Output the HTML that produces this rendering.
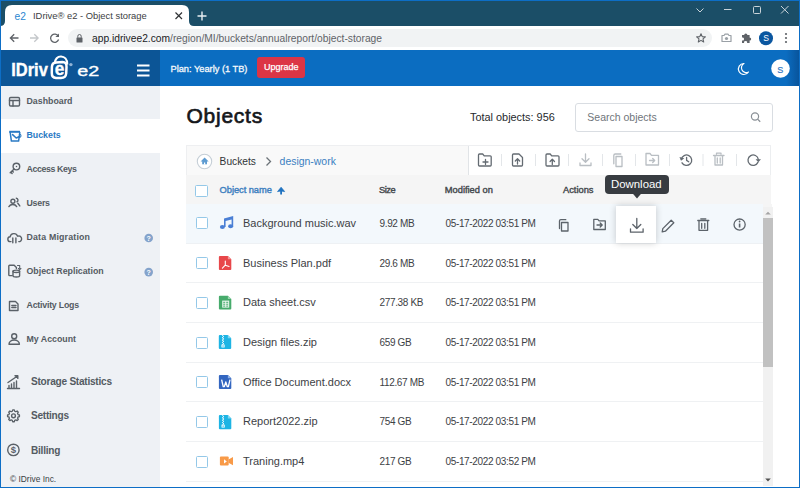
<!DOCTYPE html>
<html><head><meta charset="utf-8">
<style>
*{margin:0;padding:0;box-sizing:border-box}
html,body{width:800px;height:488px;overflow:hidden;background:#fff;font-family:"Liberation Sans",sans-serif;position:relative}
.a{position:absolute}
.t{position:absolute;white-space:nowrap;line-height:1}
svg{position:absolute;overflow:visible}
#tabstrip{left:0;top:0;width:800px;height:26px;background:#1b4e67}
#toolbar{left:0;top:26px;width:800px;height:24px;background:#fff}
#omni{left:68px;top:29px;width:644px;height:17.5px;background:#f1f3f4;border-radius:9px}
#hdrL{left:0;top:50px;width:160px;height:36px;background:#0c5596}
#hdrR{left:160px;top:50px;width:640px;height:36px;background:#0b6dc1}
#side{left:0;top:86px;width:160px;height:402px;background:#eef1f5}
.nav{position:absolute;left:0;width:160px;height:34px;font-size:8.8px;font-weight:bold;color:#545b62}
.nav span{position:absolute;left:26.5px;top:12px;line-height:1}
.t2 span{left:31px;font-size:10.1px;top:10.5px;letter-spacing:-0.25px}
#border{left:0;top:0;width:800px;height:488px;border:1px solid #0d6ec6;pointer-events:none}
.row{position:absolute;left:186px;width:577px;height:40px;border-bottom:1px solid #eff1f3}
.cb{position:absolute;left:9.5px;top:13.5px;width:12px;height:12px;border:1px solid #94c8e8;border-radius:1.5px;background:#fff}
.fn{position:absolute;left:57px;top:14px;font-size:11px;color:#3d4145;line-height:1}
.sz{position:absolute;left:193.5px;top:15px;font-size:10px;letter-spacing:-0.35px;color:#3d4145;line-height:1}
.md{position:absolute;left:259.5px;top:15px;font-size:10px;letter-spacing:-0.35px;color:#3d4145;line-height:1}
.ic{position:absolute;left:33px;top:12px}
.th{position:absolute;top:186.3px;font-size:9.3px;-webkit-text-stroke:0.4px currentColor;color:#45494d;line-height:1}
</style></head><body>
<!-- browser chrome -->
<div id="tabstrip" class="a"></div>
<svg style="left:0;top:0" width="800" height="50">
  <path d="M0 26 Q5 26 5 21 L5 12 Q5 5 12 5 L182 5 Q189 5 189 12 L189 21 Q189 26 194 26 Z" fill="#fff"/>
  <!-- favicon e2 -->
  <text x="14.6" y="19.6" font-family="Liberation Sans" font-size="11" fill="#2a86d0" textLength="11.4" lengthAdjust="spacingAndGlyphs">e2</text>
  <!-- close x -->
  <path d="M175.5 12.5l6.5 6.5M182 12.5l-6.5 6.5" stroke="#303336" stroke-width="1.2"/>
  <!-- plus -->
  <path d="M202 11.5v9M197.5 16h9" stroke="#e8eef2" stroke-width="1.4"/>
  <!-- window controls -->
  <path d="M696.5 8.5l3.5 3.5 3.5-3.5" stroke="#c9d3d9" stroke-width="1" fill="none"/>
  <path d="M724 9.5h7.5" stroke="#c9d3d9" stroke-width="1"/>
  <rect x="753.5" y="6.5" width="7" height="7" rx="1" stroke="#c9d3d9" stroke-width="1" fill="none"/>
  <path d="M781 6l7.5 7.5M788.5 6l-7.5 7.5" stroke="#c9d3d9" stroke-width="1"/>
</svg>
<div class="t" style="left:33px;top:11px;font-size:9.4px;color:#3c4043">IDrive® e2 - Object storage</div>
<div id="toolbar" class="a"></div>
<div id="omni" class="a"></div>
<svg style="left:0;top:0" width="800" height="50">
  <!-- back -->
  <path d="M18.5 38H10.5M14.2 34.2L10.4 38l3.8 3.8" stroke="#5f6368" stroke-width="1.3" fill="none"/>
  <path d="M30 38h8M34.3 34.2l3.8 3.8-3.8 3.8" stroke="#c4c7ca" stroke-width="1.3" fill="none"/>
  <!-- reload -->
  <path d="M58.3 36.2A4.1 4.1 0 1 0 58.6 39.5" stroke="#5f6368" stroke-width="1.3" fill="none"/>
  <path d="M59 33.5v3.6h-3.6z" fill="#5f6368"/>
  <!-- lock -->
  <rect x="76.5" y="37.5" width="6" height="5" rx="0.6" fill="#5f6368"/>
  <path d="M77.8 37.8v-1.6a1.7 1.7 0 0 1 3.4 0v1.6" stroke="#5f6368" stroke-width="1" fill="none"/>
  <!-- star -->
  <path d="M701.00 33.70 L702.23 36.60 L705.37 36.88 L703.00 38.95 L703.70 42.02 L701.00 40.40 L698.30 42.02 L699.00 38.95 L696.63 36.88 L699.77 36.60Z" stroke="#5f6368" stroke-width="1.1" fill="none" stroke-linejoin="round"/>
  <!-- camera -->
  <path d="M722 35.5h2l1-1.3h3l1 1.3h2v6h-9z" stroke="#9aa0a6" stroke-width="1.2" fill="none" stroke-linejoin="round"/>
  <circle cx="726.5" cy="38.5" r="1.6" fill="#9aa0a6"/>
  <!-- puzzle -->
  <path d="M742 35h2.2a1.6 1.6 0 1 1 3.2 0h2.2v2.4a1.6 1.6 0 1 1 0 3.2v2.4h-2.6a1.5 1.5 0 1 0-2.8 0h-2.2v-2.6a1.5 1.5 0 1 0 0-2.8z" fill="#5f6368"/>
  <!-- avatar -->
  <circle cx="766" cy="38.2" r="7" fill="#0b57a0"/>
  <text x="766" y="41.2" font-family="Liberation Sans" font-size="8.6" fill="#fff" text-anchor="middle">S</text>
  <!-- menu -->
  <circle cx="786" cy="34" r="1.1" fill="#5f6368"/><circle cx="786" cy="38" r="1.1" fill="#5f6368"/><circle cx="786" cy="42" r="1.1" fill="#5f6368"/>
</svg>
<div class="t" style="left:92px;top:34px;font-size:10.25px;color:#202124">app.idrivee2.com<span style="color:#5f6368">/region/MI/buckets/annualreport/object-storage</span></div>

<!-- app header -->
<div id="hdrL" class="a"></div>
<div id="hdrR" class="a"></div>
<div class="a" style="left:786px;top:50px;width:13px;height:36px;background:linear-gradient(to right,rgba(0,20,60,0),rgba(0,20,60,0.28))"></div>
<svg style="left:0;top:50px" width="160" height="36">
  <text x="11.2" y="25.5" font-family="Liberation Sans" font-weight="bold" font-size="18.8" fill="#fff" stroke="#fff" stroke-width="0.4" textLength="36.6" lengthAdjust="spacingAndGlyphs">IDriv</text>
  <!-- lock e -->
  <path d="M54.8 13.5 C54.6 4 67.6 4 67.2 14.5" stroke="#fff" stroke-width="2.2" fill="none"/>
  <path d="M56 12.4 L62.5 12 Q66.8 12 66.5 17 L66.2 23.5 Q65.8 27.9 61 27.9 L56 27.9 Q51.7 27.7 51.8 23 L51.9 17 Q52 12.6 56 12.4 Z" stroke="#fff" stroke-width="2.5" fill="none"/>
  <text x="54.8" y="24.6" font-family="Liberation Sans" font-weight="bold" font-size="18.5" fill="#fff" stroke="#fff" stroke-width="0.3" textLength="9.6" lengthAdjust="spacingAndGlyphs">e</text>
  <circle cx="70.9" cy="14.6" r="1.7" fill="#8fb3d6"/>
  <text x="77.3" y="26" font-family="Liberation Sans" font-size="15" fill="#fff" stroke="#fff" stroke-width="0.35" textLength="22" lengthAdjust="spacingAndGlyphs">e2</text>
  <!-- hamburger -->
  <path d="M137 15.5h12.5M137 20.5h12.5M137 25.5h12.5" stroke="#fff" stroke-width="1.8"/>
</svg>
<div class="t" style="left:170.5px;top:64.5px;font-size:9.25px;color:#f4f8fc;-webkit-text-stroke:0.3px #f4f8fc">Plan: Yearly (1 TB)</div>
<div class="a" style="left:257px;top:57px;width:48px;height:21px;background:#dc3545;border-radius:3px"></div>
<div class="t" style="left:264px;top:63.3px;font-size:9px;color:#fff;-webkit-text-stroke:0.25px #fff">Upgrade</div>
<svg style="left:0;top:0" width="800" height="90">
  <path d="M744 63.5 A5.5 5.5 0 1 0 748.5 72 A4.5 4.5 0 0 1 744 63.5 Z" stroke="#fff" stroke-width="1.2" fill="none" stroke-linejoin="round"/>
  <circle cx="780.5" cy="68.5" r="9.3" fill="#fff"/>
</svg>
<div class="t" style="left:777.3px;top:65.6px;font-size:9px;color:#2f78c4;-webkit-text-stroke:0.2px #2f78c4">S</div>

<!-- sidebar -->
<div id="side" class="a"></div>
<div class="nav" style="top:85px"><span>Dashboard</span></div>
<div class="nav" style="top:119px;background:#fff;color:#2a7ac4"><span>Buckets</span></div>
<div class="nav" style="top:153px"><span style="letter-spacing:-0.4px">Access Keys</span></div>
<div class="nav" style="top:187px"><span style="letter-spacing:-0.25px">Users</span></div>
<div class="nav" style="top:221px"><span style="letter-spacing:0.18px">Data Migration</span></div>
<div class="nav" style="top:255px"><span>Object Replication</span></div>
<div class="nav" style="top:289px"><span style="letter-spacing:-0.22px">Activity Logs</span></div>
<div class="nav" style="top:323px"><span>My Account</span></div>
<div class="nav t2" style="top:366px"><span>Storage Statistics</span></div>
<div class="nav t2" style="top:400.5px"><span>Settings</span></div>
<div class="nav t2" style="top:435.5px"><span>Billing</span></div>
<div class="t" style="left:10px;top:475px;font-size:8.4px;color:#3a3f44">© IDrive Inc.</div>
<svg style="left:0;top:0" width="160" height="488">
  <g stroke="#5a6168" stroke-width="1.4" fill="none" stroke-linejoin="round" stroke-linecap="round">
  <!-- dashboard -->
  <rect x="9.5" y="97.5" width="10" height="8.5" rx="1.2"/>
  <path d="M9.5 100.5h10M13 100.5v5.5"/>
  <!-- key -->
  <circle cx="16.4" cy="166.6" r="3.3"/>
  <path d="M14.1 168.9L10.2 172.8M10.8 172.2l1.3 1.3M12.2 170.8l1.1 1.1"/>
  <circle cx="16.5" cy="166.5" r="0.75" fill="#5a6168" stroke="none"/>
  <!-- users -->
  <circle cx="12.9" cy="201.2" r="2"/>
  <path d="M8.9 206.6a4.3 3.6 0 0 1 7.8 0M16.3 198.2a1.9 1.9 0 0 1 .6 3.6M17.8 203.3l2 2.6"/>
  <!-- cloud -->
  <path d="M11 241.6h-0.6a2.4 2.4 0 0 1-.3-4.8a3.9 3.9 0 0 1 7.5-.6a2.7 2.7 0 0 1 2.2 5.4h-1"/>
  <path d="M12.8 238v4.8M15.9 238v4.8"/>
  <!-- replication -->
  <path d="M12.2 275.6h-2.6a0.8 0.8 0 0 1-.8-.8v-8.8a0.8 0.8 0 0 1 .8-.8h4.6l2.2 2.2v1.2"/>
  <ellipse cx="16.3" cy="271.3" rx="3.3" ry="1.2"/>
  <path d="M13 271.3v4.5a3.3 1.2 0 0 0 6.6 0v-4.5"/>
  <path d="M17.5 265.5h2.2v2.5M18.5 268.5l1.2 1.2 1.2-1.2" stroke-width="1.1"/>
  <!-- activity logs -->
  <path d="M9.5 301.5h6l2.5 2.5v6.5h-8.5z" fill="none"/>
  <path d="M11.8 305.5h4.2M11.8 307.5h4.2"/>
  <!-- my account -->
  <circle cx="14.2" cy="336.2" r="2.5"/>
  <path d="M9 344.2a5.2 4.2 0 0 1 10.4 0z"/>
  <!-- stats -->
  <path d="M7.5 388.5h12M9 388v-2.5M11.5 388v-4M14 388v-5.5M16.5 388v-7M8 382.5l9.5-6.5M15 375.8h2.8v2.6"/>
  <!-- gear -->
  <circle cx="13.5" cy="415.8" r="1.9"/>
  <path d="M19.45 415.00 L19.45 416.60 L18.04 417.00 L17.56 418.16 L18.27 419.44 L17.14 420.57 L15.86 419.86 L14.70 420.34 L14.30 421.75 L12.70 421.75 L12.30 420.34 L11.14 419.86 L9.86 420.57 L8.73 419.44 L9.44 418.16 L8.96 417.00 L7.55 416.60 L7.55 415.00 L8.96 414.60 L9.44 413.44 L8.73 412.16 L9.86 411.03 L11.14 411.74 L12.30 411.26 L12.70 409.85 L14.30 409.85 L14.70 411.26 L15.86 411.74 L17.14 411.03 L18.27 412.16 L17.56 413.44 L18.04 414.60Z" stroke-width="1.3"/>
  <!-- billing -->
  <circle cx="13.4" cy="449.9" r="5.7"/>
  </g>
  <text x="13.4" y="453.4" font-family="Liberation Sans" font-weight="bold" font-size="9.5" fill="#5a6168" text-anchor="middle">$</text>
  <!-- buckets icon active -->
  <path d="M9.2 130.8h10.8v2h-10.8z" fill="#2a7ac4"/>
  <g stroke="#2a7ac4" stroke-width="1.5" fill="none" stroke-linejoin="round" stroke-linecap="round">
    <path d="M10.2 132.5l1.2 8.6h7.2l1.2-8.6"/>
    <path d="M12.6 134.6l3.6 3.4 2.8-1.2"/>
    <path d="M19.4 134.2a1.6 1.6 0 0 1 0 3.2" stroke-width="1.1"/>
  </g>
  <!-- help -->
  <circle cx="148.7" cy="238" r="4.3" fill="#84a3cb"/>
  <circle cx="148.7" cy="272.1" r="4.3" fill="#84a3cb"/>
  <text x="148.7" y="240.7" font-family="Liberation Sans" font-weight="bold" font-size="7" fill="#fff" text-anchor="middle">?</text>
  <text x="148.7" y="274.8" font-family="Liberation Sans" font-weight="bold" font-size="7" fill="#fff" text-anchor="middle">?</text>
</svg>

<!-- main -->
<div class="t" style="left:186.5px;top:104.8px;font-size:21px;letter-spacing:0.75px;-webkit-text-stroke:0.65px #14171a;color:#14171a">Objects</div>
<div class="t" style="left:470px;top:112px;font-size:10.9px;color:#26292c">Total objects: 956</div>
<div class="a" style="left:575px;top:103px;width:198px;height:28.5px;border:1px solid #d9dde2;border-radius:3px"></div>
<div class="t" style="left:587.3px;top:112px;font-size:10.5px;color:#6f757b">Search objects</div>
<svg style="left:0;top:0" width="800" height="488">
  <circle cx="755" cy="116.5" r="3.6" stroke="#8a9096" stroke-width="1.2" fill="none"/>
  <path d="M757.6 119.1l2.6 2.6" stroke="#8a9096" stroke-width="1.3"/>
</svg>

<!-- breadcrumb bar -->
<div class="a" style="left:186px;top:145px;width:585px;height:31px;background:#f9f9f9;border:1px solid #eeeff1;border-right:none"></div>
<div class="a" style="left:468px;top:146px;width:303px;height:29px;background:#fff;border-left:1px solid #e1e4e7;border-right:1px solid #eceef0"></div>
<svg style="left:0;top:0" width="800" height="488">
  <circle cx="204.5" cy="161.5" r="7.2" stroke="#c5ced6" stroke-width="1.1" fill="#fff"/>
  <path d="M200.6 161.6L204.6 157.5L208.6 161.6z" fill="#5d9bd1"/>
  <path d="M202.2 161h4.8v3.3h-4.8z" fill="#5d9bd1"/><path d="M204 162.6h1.2v1.8h-1.2z" fill="#fff"/>
  <path d="M266.5 157.5l4 4-4 4" stroke="#6b7278" stroke-width="1.3" fill="none"/>
</svg>
<div class="t" style="left:219.6px;top:157px;font-size:10.2px;color:#2f3336">Buckets</div>
<div class="t" style="left:279.6px;top:157px;font-size:10.45px;color:#3a7fc1">design-work</div>

<!-- toolbar icons -->
<svg style="left:0;top:0" width="800" height="488">
  <g stroke="#e3e6e9" stroke-width="1"><path d="M501.5 154v12M535.5 154v12M568.5 154v12M602.5 154v12M635.5 154v12M669.5 154v12M703 154v12M736.5 154v12"/></g>
  <g stroke="#646b72" stroke-width="1.3" fill="none" stroke-linejoin="round" stroke-linecap="round">
    <!-- folder plus -->
    <path d="M479.5 154h3.2l1.5 1.8h6a1 1 0 0 1 1 1v8.2a1 1 0 0 1-1 1h-10.7a1 1 0 0 1-1-1v-10a1 1 0 0 1 1-1z"/><path d="M485.5 159.5v5M483 162h5"/>
    <!-- file upload -->
    <path d="M513.5 154h5.5l3.5 3.5v7.5a1 1 0 0 1-1 1h-8a1 1 0 0 1-1-1v-10a1 1 0 0 1 1-1z"/><path d="M517.5 164v-5M515.3 161l2.2-2.2 2.2 2.2"/>
    <!-- folder upload -->
    <path d="M547 154h3.2l1.5 1.8h6.3a1 1 0 0 1 1 1v8.2a1 1 0 0 1-1 1h-11a1 1 0 0 1-1-1v-10a1 1 0 0 1 1-1z"/><path d="M552.3 164.5v-5M550.1 161.5l2.2-2.2 2.2 2.2"/>
    <!-- history -->
    <path d="M681.38 159.30A5.2 5.2 0 1 1 682.00 162.80"/><path d="M686.6 157.3v3.1l2.1 1.4"/>
    <!-- refresh -->
    <path d="M758.32 159.30A5.2 5.2 0 1 0 757.91 162.40"/>
  </g>
  <path d="M755.6 159.2h5.4l-2.7 3z" fill="#646b72"/><path d="M679 157.6h5l-2.5 3.2z" fill="#646b72" transform="rotate(15 681.5 159)"/>
  <g stroke="#b9bec3" stroke-width="1.3" fill="none" stroke-linejoin="round" stroke-linecap="round">
    <!-- download disabled -->
    <path d="M585.5 154v8M582 158.8l3.5 3.5 3.5-3.5M580 163v2.5h11v-2.5"/>
    <!-- copy disabled -->
    <path d="M616 156.5h6v10h-6z"/><path d="M613.8 163.8v-8.3a1.5 1.5 0 0 1 1.5-1.5h5.5"/>
    <!-- move disabled -->
    <path d="M646 153.5h4l1.5 1.8h7v9.7h-12.5z"/><path d="M649.5 160.5h5M652.7 158.5l2 2-2 2"/>
    <!-- trash disabled -->
    <path d="M713.5 155.5h10.5M715 155.5v9.5h7.5v-9.5M716.5 154v-0.8h4.5v0.8M717.3 158v5M720.2 158v5"/>
  </g>
</svg>

<!-- table header -->
<div class="a" style="left:186px;top:175px;width:585px;height:28.5px;background:#f5f5f5"></div>
<div class="a" style="left:195px;top:185px;width:12.5px;height:12px;border:1px solid #94c8e8;border-radius:1.5px;background:#fff"></div>
<div class="th" style="left:219.6px;color:#3d7fc0;letter-spacing:-0.05px">Object name</div>
<svg style="left:0;top:0" width="800" height="488"><path d="M277.5 191.6L281.1 187.2L284.7 191.6Q281.1 190.6 277.5 191.6z" fill="#1f72c0" stroke="#1f72c0" stroke-width="0.7" stroke-linejoin="round"/><path d="M281.1 190v4.4" stroke="#1f72c0" stroke-width="1.8"/></svg>
<div class="th" style="left:379px;letter-spacing:-0.5px">Size</div>
<div class="th" style="left:444.8px">Modified on</div>
<div class="th" style="left:563px">Actions</div>

<!-- rows -->
<div class="row" style="top:203.5px;height:40.1px;background:#f3f8fc;border-bottom-color:#eef1f4"><div class="cb"></div><div class="fn">Background music.wav</div><div class="sz">9.92 MB</div><div class="md">05-17-2022 03:51 PM</div></div>
<div class="row" style="top:243.6px;height:39.7px"><div class="cb"></div><div class="fn">Business Plan.pdf</div><div class="sz">29.6 MB</div><div class="md">05-17-2022 03:51 PM</div></div>
<div class="row" style="top:283.3px;height:39.7px"><div class="cb"></div><div class="fn">Data sheet.csv</div><div class="sz">277.38 KB</div><div class="md">05-17-2022 03:51 PM</div></div>
<div class="row" style="top:323px;height:39.7px"><div class="cb"></div><div class="fn">Design files.zip</div><div class="sz">659 GB</div><div class="md">05-17-2022 03:51 PM</div></div>
<div class="row" style="top:362.7px;height:39.7px"><div class="cb"></div><div class="fn">Office Document.docx</div><div class="sz">112.67 MB</div><div class="md">05-17-2022 03:51 PM</div></div>
<div class="row" style="top:402.4px;height:39.7px"><div class="cb"></div><div class="fn">Report2022.zip</div><div class="sz">754 GB</div><div class="md">05-17-2022 03:51 PM</div></div>
<div class="row" style="top:442.1px;height:39.7px"><div class="cb"></div><div class="fn">Traning.mp4</div><div class="sz">217 GB</div><div class="md">05-17-2022 03:52 PM</div></div>

<!-- file icons -->
<svg style="left:0;top:0" width="800" height="488">
  <!-- music -->
  <g fill="#4a7fd5">
    <ellipse cx="222.4" cy="227.1" rx="2.5" ry="2"/>
    <ellipse cx="230.6" cy="226.2" rx="2.5" ry="2"/>
    <path d="M224 227v-8.6l9.2-2.4v10.2h-1.6v-6.6l-6 1.5v5.9z"/>
  </g>
  <!-- pdf -->
  <path d="M220.9 255.9h7.0l3.4 3.4v9.7q0 1-1 1h-10.4q-1 0-1-1v-12.1q0-1 1-1z" fill="#e8474a"/><path d="M227.9 255.9l3.4 3.4h-3.4z" fill="#f29a9b"/>
  <path d="M225.3 261v4.2M225.3 265.2l-2.9 3M225.3 265.2l3.8 1.2" stroke="#fff" stroke-width="1.1" fill="none" stroke-linecap="round"/>
  <!-- sheets -->
  <path d="M220.9 295.7h7.0l3.4 3.4v9.4q0 1-1 1h-10.4q-1 0-1-1v-11.8q0-1 1-1z" fill="#47ab6c"/><path d="M227.9 295.7l3.4 3.4h-3.4z" fill="#9cd6b0"/>
  <rect x="222.2" y="300.6" width="7" height="7" fill="#e9f6ee"/>
  <path d="M223.2 302.3h2M226.2 302.3h2M223.2 304.2h2M226.2 304.2h2M223.2 306.1h2M226.2 306.1h2" stroke="#47ab6c" stroke-width="1"/>
  <!-- zip 1 -->
  <path d="M220.8 334.9h7.0l3.4 3.4v9.7q0 1-1 1h-10.4q-1 0-1-1v-12.1q0-1 1-1z" fill="#1db4e4"/><path d="M227.8 334.9l3.4 3.4h-3.4z" fill="#7fd6f2"/>
  <path d="M222.2 335.3l1.6 1.2-1.6 1.2 1.6 1.2-1.6 1.2 1.6 1.2-1.6 1.2 1.6 1.2-1.6 1.2" stroke="#fff" stroke-width="1" fill="none"/>
  <rect x="221.9" y="345" width="2.3" height="2" stroke="#fff" stroke-width="0.9" fill="none"/>
  <!-- word -->
  <path d="M220.9 374.9h7.0l3.4 3.4v9.7q0 1-1 1h-10.4q-1 0-1-1v-12.1q0-1 1-1z" fill="#3366c0"/><path d="M227.9 374.9l3.4 3.4h-3.4z" fill="#8fb2e8"/>
  <path d="M221.6 379.7l1.6 6.8h1.2l1.4-4.6 1.4 4.6h1.2l1.6-6.8" stroke="#fff" stroke-width="1.3" fill="none" stroke-linejoin="round"/>
  <!-- zip 2 -->
  <path d="M220.9 415h7.0l3.4 3.4v9.9q0 1-1 1h-10.4q-1 0-1-1v-12.3q0-1 1-1z" fill="#1db4e4"/><path d="M227.9 415l3.4 3.4h-3.4z" fill="#7fd6f2"/>
  <path d="M222.3 415.4l1.6 1.2-1.6 1.2 1.6 1.2-1.6 1.2 1.6 1.2-1.6 1.2 1.6 1.2-1.6 1.2" stroke="#fff" stroke-width="1" fill="none"/>
  <rect x="222" y="425.1" width="2.3" height="2" stroke="#fff" stroke-width="0.9" fill="none"/>
  <!-- video -->
  <rect x="219.9" y="456.6" width="8.8" height="8.9" rx="1" fill="#f89a48"/>
  <path d="M228.5 459.6l4.5-2.5v8.1l-4.5-2.5z" fill="#f89a48"/>
  <path d="M224 459.2v4.4l2.8-2.2z" fill="#fff"/>
</svg>

<!-- row actions -->
<div class="a" style="left:616px;top:206px;width:40px;height:37px;background:#fff;box-shadow:0 0 7px rgba(0,0,0,0.2)"></div>
<svg style="left:0;top:0" width="800" height="488">
  <g stroke="#5c636a" stroke-width="1.3" fill="none" stroke-linejoin="round" stroke-linecap="round">
    <!-- copy -->
    <path d="M561.5 222.5h6.5v8.5h-6.5z"/><path d="M559.5 228.5v-7.5a1.3 1.3 0 0 1 1.3-1.3h5"/>
    <!-- move -->
    <path d="M593.8 219.3h4l1.3 1.6h6.2v8.6h-11.5z"/><path d="M597 225h5M600.2 223l2 2-2 2"/>
    <!-- download -->
    <path d="M636.8 218.5v10M632.8 224.5l4 4 4-4M630.5 228.8v3.4h12.6v-3.4"/>
    <!-- pencil -->
    <path d="M662.2 231.8l.6-3.2 8.4-8.4 2.6 2.6-8.4 8.4z"/>
    <!-- trash -->
    <path d="M697.8 220.5h11M699 220.5v9.8h8.6v-9.8M700.8 218.8h5M701.7 223.3v5M704.8 223.3v5"/>
    <!-- info -->
    <circle cx="739.6" cy="224.6" r="5.6"/>
  </g>
  <path d="M739.6 223.5v4" stroke="#5c636a" stroke-width="1.6"/>
  <circle cx="739.6" cy="221.5" r="0.9" fill="#5c636a"/>
</svg>

<!-- tooltip -->
<div class="a" style="left:604.5px;top:174.5px;width:64px;height:19px;background:#383c41;border-radius:4px"></div>
<svg style="left:0;top:0" width="800" height="488"><path d="M632.3 193h9.4l-4.7 5.6z" fill="#383c41"/></svg>
<div class="t" style="left:611px;top:178.5px;font-size:11.4px;color:#fff">Download</div>

<!-- scrollbar -->
<div class="a" style="left:763px;top:203.5px;width:9px;height:3px;background:#f5f5f5"></div><div class="a" style="left:772px;top:203.5px;width:1px;height:3px;background:#fff"></div><div class="a" style="left:763px;top:206.5px;width:10px;height:279.5px;background:#f1f1f1"></div>
<div class="a" style="left:763px;top:218px;width:10px;height:149px;background:#c1c1c1"></div>
<svg style="left:0;top:0" width="800" height="488">
  <path d="M765.2 214.6l2.8-2.9 2.8 2.9z" fill="#a3a3a3"/>
  <path d="M765.2 478.6l2.8 2.9 2.8-2.9z" fill="#505050"/>
</svg>

<div id="border" class="a"></div>
</body></html>
